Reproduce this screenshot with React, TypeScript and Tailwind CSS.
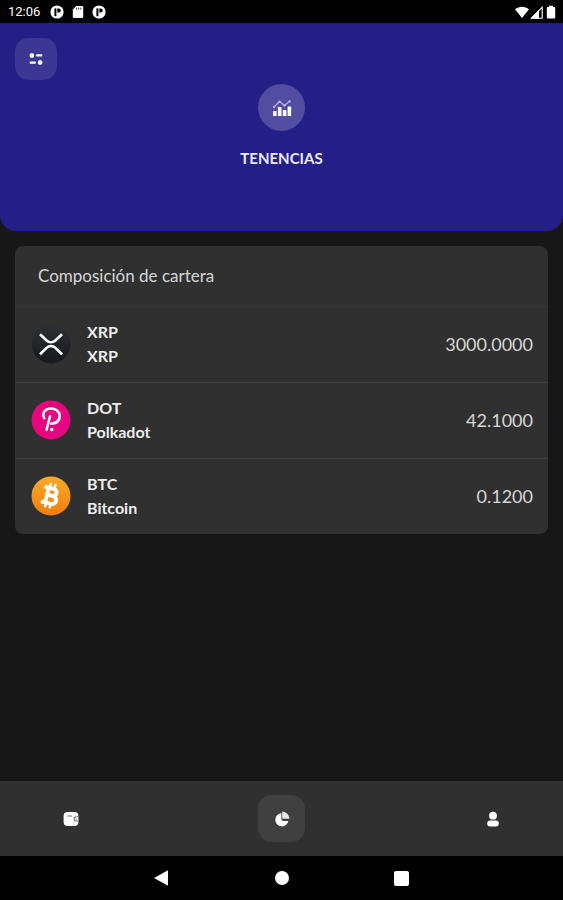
import React, { useState } from "react";

type Holding = {
  symbol: string;
  name: string;
  amount: number;
  icon: React.ReactNode;
};

type TabId = "wallet" | "holdings" | "profile";

function XrpIcon() {
  return (
    <svg viewBox="0 0 40 40" className="size-10" aria-hidden="true">
      <defs>
        <linearGradient id="xrp-bg" x1="0" y1="0" x2="0" y2="1">
          <stop offset="0" stopColor="#2d3136" />
          <stop offset="1" stopColor="#15191e" />
        </linearGradient>
      </defs>
      <circle cx="20" cy="20" r="19.5" fill="url(#xrp-bg)" />
      <g fill="none" stroke="#fff" strokeWidth="2.6">
        <path d="M9 10.2l6.6 6.3c2.6 2.4 6.2 2.4 8.8 0l6.6-6.3" />
        <path d="M9 30.2l6.6-6.3c2.6-2.4 6.2-2.4 8.8 0l6.6 6.3" />
      </g>
    </svg>
  );
}

function DotIcon() {
  return (
    <svg viewBox="0 0 40 40" className="size-10" aria-hidden="true">
      <circle cx="20" cy="20" r="19.5" fill="#e6057e" />
      <path
        d="M13.2 18.2c-1.9-3.2-.9-6.6 2.3-8.5 4.4-2.4 10.2-.9 12.4 3 2.4 4.8-.6 10.4-6.4 10.8l-1.2.1"
        fill="none"
        stroke="#fff"
        strokeWidth="2.6"
        strokeLinecap="round"
      />
      <path d="M19 16.4l-3.4 13.4" fill="none" stroke="#fff" strokeWidth="2.6" strokeLinecap="round" />
      <circle cx="20.8" cy="29.6" r="1.8" fill="#fff" />
    </svg>
  );
}

function BtcIcon() {
  return (
    <svg viewBox="0 0 40 40" className="size-10" aria-hidden="true">
      <defs>
        <linearGradient id="btc-bg" x1="0" y1="0" x2="0" y2="1">
          <stop offset="0" stopColor="#f9aa2b" />
          <stop offset="1" stopColor="#f27d0c" />
        </linearGradient>
      </defs>
      <circle cx="20" cy="20" r="19.5" fill="url(#btc-bg)" />
      <g transform="rotate(14 20 20)" fill="none" stroke="#fff">
        <path
          d="M11.5 12.5h9.3c5.2 0 5.2 7.1 0 7.1h-4.6M16.2 19.6h5.6c5.8 0 5.8 8 0 8H11.5M15.8 12.5v15"
          strokeWidth="3.8"
        />
        <path d="M16.8 7.4v5M21.6 7.4v5M16.8 27.4v5M21.6 27.4v5" strokeWidth="2.5" />
      </g>
    </svg>
  );
}

function ChartIcon() {
  return (
    <svg viewBox="0 0 20 18" className="h-[18px] w-5" aria-hidden="true">
      <g fill="#fff">
        <rect x="1" y="12" width="3.6" height="5" rx=".6" />
        <rect x="5.9" y="8" width="3.6" height="9" rx=".6" />
        <rect x="10.8" y="11" width="3.6" height="6" rx=".6" />
        <rect x="15.6" y="7.5" width="3.6" height="9.5" rx=".6" />
      </g>
      <path d="M1.5 8.5l6-6 5 4L18 2" fill="none" stroke="#b9b4e2" strokeWidth="1.2" />
      <g fill="#b9b4e2">
        <circle cx="2" cy="8" r="1.2" />
        <circle cx="7.5" cy="2.6" r="1.2" />
        <circle cx="12.5" cy="6.4" r="1.2" />
        <circle cx="17.6" cy="2.4" r="1.2" />
      </g>
    </svg>
  );
}

function FilterIcon() {
  return (
    <svg viewBox="0 0 14 14" className="size-3.5" fill="#fff" aria-hidden="true">
      <rect x=".6" y="1.2" width="4.6" height="4.6" rx="1.8" />
      <rect x="7" y="2.3" width="6.4" height="2.3" rx="1" />
      <rect x="8.8" y="8.2" width="4.6" height="4.6" rx="1.8" />
      <rect x=".6" y="9.4" width="6.4" height="2.3" rx="1" />
    </svg>
  );
}

function WalletIcon() {
  return (
    <svg viewBox="0 0 16 16" className="size-4" aria-hidden="true">
      <rect x=".6" y="1" width="14.8" height="14" rx="4" fill="#fff" />
      <path d="M4.5 5h4" stroke="#777" strokeWidth="1.1" strokeLinecap="round" />
      <path d="M15.4 5.8h-2.2a2.1 2.1 0 000 4.2h2.2" fill="none" stroke="#777" strokeWidth="1.1" />
      <circle cx="13.2" cy="7.9" r=".7" fill="#777" />
    </svg>
  );
}

function PieIcon() {
  return (
    <svg viewBox="0 0 16 16" className="size-4" aria-hidden="true">
      <path d="M7.4 2.2a6.6 6.6 0 107 7.8H9.4a2 2 0 01-2-2z" fill="#fff" />
      <path d="M8.2.6v5.6c0 1 .5 1.5 1.5 1.5h5.7C15.2 3.9 12.2.9 8.2.6z" fill="#e8e8e8" />
    </svg>
  );
}

function UserIcon() {
  return (
    <svg viewBox="0 0 16 16" className="size-4" fill="#fff" aria-hidden="true">
      <circle cx="8" cy="4.7" r="3.9" />
      <rect x="2.2" y="9.6" width="11.6" height="5.8" rx="2.9" />
    </svg>
  );
}

// small round notification badge
function NotificationIcon() {
  return (
    <svg viewBox="0 0 14 14" className="size-3.5" aria-hidden="true">
      <circle cx="7" cy="7" r="6.6" fill="#fff" />
      <path d="M4.4 3.4h2v7.8h-2z" />
      <path d="M7.3 3.4h1.4a2.1 2.1 0 010 4.2H7.3z" />
    </svg>
  );
}

function StatusBar() {
  return (
    <div className="flex h-[23px] items-center justify-between bg-black pt-px pr-1.5 pl-2">
      <div className="flex items-center">
        <span className="mr-2.5 font-[Roboto,sans-serif] text-[13px] leading-4 text-white">12:06</span>
        <div className="flex items-center gap-[7px]">
          <NotificationIcon />
          <svg viewBox="0 0 14 14" className="size-3.5" aria-hidden="true">
            <path d="M5.2 1H11a1.2 1.2 0 011.2 1.2v9.6A1.2 1.2 0 0111 13H3a1.2 1.2 0 01-1.2-1.2V4.4z" fill="#fff" />
            <path d="M5.6 2.6v2M7.7 2.6v2M9.8 2.6v2" stroke="#000" strokeWidth=".8" />
          </svg>
          <NotificationIcon />
        </div>
      </div>
      <div className="flex items-center gap-px">
        <svg viewBox="0 0 14 12" className="h-3 w-3.5" aria-hidden="true">
          <path d="M7 12L0 3.3C4 -.1 10-.1 14 3.3z" fill="#fff" />
        </svg>
        <svg viewBox="0 0 14 13" className="h-[13px] w-3.5" aria-hidden="true">
          <path d="M1.5 12.2L12.2 1.2v11z" fill="none" stroke="#fff" strokeWidth="1.1" />
          <path d="M.6 12.6L9 4v8.6z" fill="#fff" />
        </svg>
        <svg viewBox="0 0 12 14" className="h-3.5 w-3" aria-hidden="true">
          <path d="M4 .8h4V2h1.2a1 1 0 011 1v9.4a1 1 0 01-1 1H2.8a1 1 0 01-1-1V3a1 1 0 011-1H4z" fill="#fff" />
        </svg>
      </div>
    </div>
  );
}

function SystemNav() {
  return (
    <div className="flex h-11 items-center justify-center bg-black">
      <button aria-label="Atrás" className="flex w-[120px] justify-center">
        <svg viewBox="0 0 16 16" className="size-4" aria-hidden="true">
          <path d="M14 .2v15.6L0 8z" fill="#fff" />
        </svg>
      </button>
      <button aria-label="Inicio" className="flex w-[120px] justify-center">
        <span className="size-3.5 rounded-full bg-white" />
      </button>
      <button aria-label="Recientes" className="flex w-[120px] justify-center">
        <span className="size-[15px] rounded-xs bg-white" />
      </button>
    </div>
  );
}

const holdings: Holding[] = [
  { symbol: "XRP", name: "XRP", amount: 3000, icon: <XrpIcon /> },
  { symbol: "DOT", name: "Polkadot", amount: 42.1, icon: <DotIcon /> },
  { symbol: "BTC", name: "Bitcoin", amount: 0.12, icon: <BtcIcon /> },
];

const tabs: { id: TabId; label: string; icon: React.ReactNode }[] = [
  { id: "wallet", label: "Billetera", icon: <WalletIcon /> },
  { id: "holdings", label: "Tenencias", icon: <PieIcon /> },
  { id: "profile", label: "Perfil", icon: <UserIcon /> },
];

export default function App() {
  const [tab, setTab] = useState<TabId>("holdings");

  return (
    <div className="flex min-h-screen flex-col bg-[#171717] font-[Lato,sans-serif] text-white">
      <StatusBar />

      <header className="rounded-b-2xl bg-[#241f86] px-[15px] pt-[15px] pb-[61px]">
        <button
          aria-label="Filtros"
          className="flex size-[42px] items-center justify-center rounded-[14px] bg-[#3c3792]"
        >
          <FilterIcon />
        </button>
        <div className="mt-1 flex flex-col items-center">
          <div className="flex size-[47px] items-center justify-center rounded-full bg-[#524da0]">
            <ChartIcon />
          </div>
          <h1 className="mt-[15px] text-[15px] leading-6 font-bold text-[#eceaf8]">TENENCIAS</h1>
        </div>
      </header>

      <main className="flex-1 p-[15px]">
        <section className="overflow-hidden rounded-lg bg-[#303030]">
          <h2 className="px-[23px] py-[18px] text-[17px] leading-6 text-[#d6d6d6]">Composición de cartera</h2>
          <ul>
            {holdings.map((h) => (
              <li
                key={h.symbol}
                className="flex h-19 items-center border-t border-[#3d3d3d] pr-[15px] pb-0.5 pl-4 first:border-[#353535]"
              >
                {h.icon}
                <div className="ml-4 flex-1 text-base leading-6 font-bold text-[#eeeeee]">
                  <p>{h.symbol}</p>
                  <p>{h.name}</p>
                </div>
                <span className="text-lg leading-6 text-[#d6d6d6]">{h.amount.toFixed(4)}</span>
              </li>
            ))}
          </ul>
        </section>
      </main>

      <nav className="flex h-[75px] items-center justify-between bg-[#303030] px-[47px]">
        {tabs.map((t) => (
          <button
            key={t.id}
            aria-label={t.label}
            onClick={() => setTab(t.id)}
            className={[
              "flex size-[47px] items-center justify-center rounded-[14px]",
              tab === t.id ? "bg-[#404040]" : "",
            ].join(" ")}
          >
            {t.icon}
          </button>
        ))}
      </nav>
      <SystemNav />
    </div>
  );
}
